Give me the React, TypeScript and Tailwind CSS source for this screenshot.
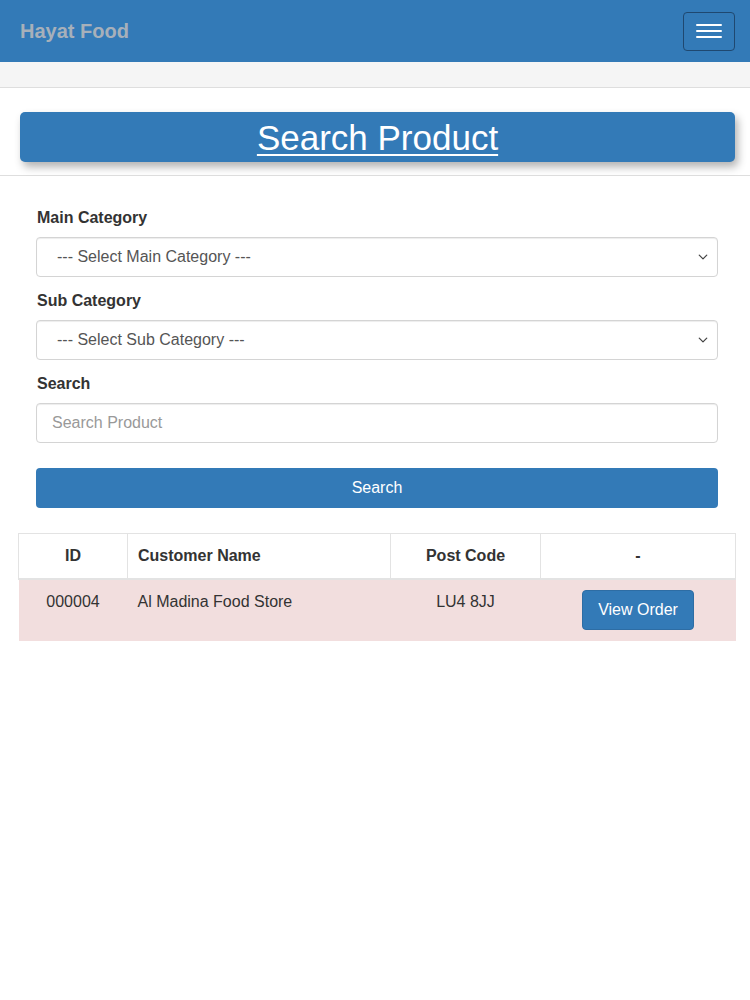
import React from 'react'

function Chevron() {
  return (
    <svg width="10" height="10" viewBox="0 0 16 16" className="absolute right-[10px] top-1/2 -translate-y-1/2 pointer-events-none">
      <path d="M2 5l6 6 6-6" fill="none" stroke="#444" strokeWidth="2" strokeLinecap="round" strokeLinejoin="round" />
    </svg>
  )
}

function SelectField({ label, placeholder }: { label: string; placeholder: string }) {
  return (
    <div className="mb-[12px]">
      <label className="block text-[16px] leading-[24px] font-bold text-[#333] mb-[7px] ml-[1px]">{label}</label>
      <div className="relative">
        <select
          defaultValue=""
          className="w-full h-[40px] appearance-none rounded-[4px] border border-[#d4d4d4] bg-white pl-[20px] pr-8 text-[16px] text-[#555] shadow-[inset_0_1px_1px_rgba(0,0,0,0.075)] outline-none"
        >
          <option value="">{placeholder}</option>
        </select>
        <Chevron />
      </div>
    </div>
  )
}

export default function App() {
  return (
    <div className="min-h-[1000px] bg-white font-['Liberation_Sans',Arial,sans-serif] text-[#333]">
      <nav className="h-[62px] bg-[#337ab7] flex items-center justify-between pl-[20px] pr-[15px]">
        <span className="text-[20px] font-bold text-[#a7b0ba]">Hayat Food</span>
        <button className="w-[52px] h-[39px] rounded-[4px] border border-[#1f4870] flex flex-col items-center justify-center gap-[4px]">
          <span className="block w-[26px] h-[2px] bg-white rounded" />
          <span className="block w-[26px] h-[2px] bg-white rounded" />
          <span className="block w-[26px] h-[2px] bg-white rounded" />
        </button>
      </nav>

      <div className="h-[25px] bg-[#f5f5f5]" />

      <div className="border-y border-[#dedede] bg-white h-[89px] pt-[24px] px-[20px] pr-[15px]">
        <div className="h-[50px] rounded-[5px] bg-[#337ab7] flex items-center justify-center shadow-[3px_5px_8px_rgba(0,0,0,0.3)]">
          <h1 className="text-[35px] text-white underline underline-offset-[4px] decoration-[2px] leading-none">Search Product</h1>
        </div>
      </div>

      <div className="px-[36px] pr-[32px] pt-[30px]">
        <SelectField label="Main Category" placeholder="--- Select Main Category ---" />
        <SelectField label="Sub Category" placeholder="--- Select Sub Category ---" />
        <div>
          <label className="block text-[16px] leading-[24px] font-bold text-[#333] mb-[7px] ml-[1px]">Search</label>
          <input
            placeholder="Search Product"
            className="w-full h-[40px] rounded-[4px] border border-[#d4d4d4] bg-white px-[15px] text-[16px] text-[#555] placeholder:text-[#999] shadow-[inset_0_1px_1px_rgba(0,0,0,0.075)] outline-none"
          />
        </div>
        <button className="mt-[25px] w-full h-[40px] rounded-[4px] bg-[#337ab7] text-white text-[16px]">Search</button>
      </div>

      <div className="px-[18px] pr-[14px] mt-[25px]">
        <table className="w-full border-collapse text-[16px]">
          <thead>
            <tr className="h-[45px] bg-white">
              <th className="w-[109px] border border-[#e3e3e3] border-b-2 font-bold text-center">ID</th>
              <th className="w-[263px] border border-[#e3e3e3] border-b-2 font-bold text-left pl-[10px]">Customer Name</th>
              <th className="w-[150px] border border-[#e3e3e3] border-b-2 font-bold text-center">Post Code</th>
              <th className="border border-[#e3e3e3] border-b-2 font-bold text-center">-</th>
            </tr>
          </thead>
          <tbody>
            <tr className="h-[62px] bg-[#f2dede] align-top">
              <td className="text-center pt-[10px] text-[#333]">000004</td>
              <td className="pl-[10px] pt-[10px] text-[#333]">Al Madina Food Store</td>
              <td className="text-center pt-[10px] text-[#333]">LU4 8JJ</td>
              <td className="text-center pt-[10px]">
                <button className="h-[40px] px-[15px] rounded-[4px] bg-[#337ab7] border border-[#2e6da4] text-white text-[16px]">View Order</button>
              </td>
            </tr>
          </tbody>
        </table>
      </div>
    </div>
  )
}
